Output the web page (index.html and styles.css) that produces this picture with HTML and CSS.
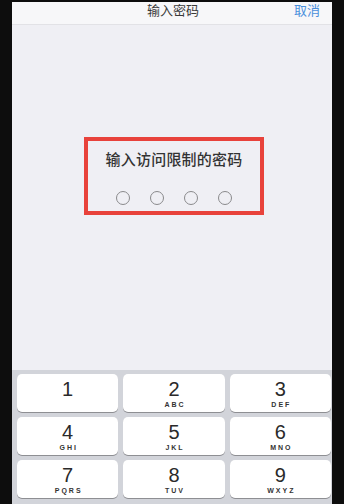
FILE: index.html
```html
<!DOCTYPE html>
<html lang="zh">
<head>
<meta charset="utf-8">
<link rel="stylesheet" href="styles.css">
</head>
<body>
<div class="screen">
  <div class="header">
    <span class="title">输入密码</span>
    <span class="cancel">取消</span>
  </div>
  <div class="content">
    <div class="box">
      <div class="prompt">输入访问限制的密码</div>
      <div class="dots">
        <span class="dot"></span><span class="dot"></span><span class="dot"></span><span class="dot"></span>
      </div>
    </div>
  </div>
  <div class="keypad">
    <div class="key"><span class="num">1</span><span class="letters"></span></div>
    <div class="key"><span class="num">2</span><span class="letters">ABC</span></div>
    <div class="key"><span class="num">3</span><span class="letters">DEF</span></div>
    <div class="key"><span class="num">4</span><span class="letters">GHI</span></div>
    <div class="key"><span class="num">5</span><span class="letters">JKL</span></div>
    <div class="key"><span class="num">6</span><span class="letters">MNO</span></div>
    <div class="key"><span class="num">7</span><span class="letters">PQRS</span></div>
    <div class="key"><span class="num">8</span><span class="letters">TUV</span></div>
    <div class="key"><span class="num">9</span><span class="letters">WXYZ</span></div>
  </div>
</div>
</body>
</html>
```
FILE: styles.css
```css
html, body {
  margin: 0;
  padding: 0;
  background: #0d0d0d;
  height: 504px;
  overflow: hidden;
}
body {
  font-family: "Liberation Sans", "Noto Sans CJK SC", sans-serif;
}
.screen {
  margin: 2px 0 0 12px;
  width: 320px;
  height: 502px;
  display: flex;
  flex-direction: column;
  background: #efeff4;
}
.header {
  height: 22px;
  background: #f7f7f9;
  border-bottom: 1px solid #e2e2e6;
  position: relative;
  display: flex;
  justify-content: center;
  align-items: flex-start;
  font-family: "Noto Sans CJK SC", sans-serif;
  font-size: 13px;
  line-height: 15px;
}
.title {
  color: #3a3a3a;
  margin-left: 2px;
}
.cancel {
  position: absolute;
  right: 12px;
  top: 0;
  color: #4a8fdc;
}
.content {
  flex: 1;
  padding-top: 112px;
}
.box {
  margin-left: 72px;
  width: 172px;
  height: 70px;
  border: 4px solid #e8423b;
  display: flex;
  flex-direction: column;
  align-items: center;
}
.prompt {
  margin-top: 8px;
  font-family: "Noto Sans CJK SC", sans-serif;
  font-size: 15px;
  font-weight: 500;
  line-height: 20px;
  color: #333;
  letter-spacing: 0.2px;
}
.dots {
  margin-top: 22px;
  display: flex;
  gap: 20px;
}
.dot {
  width: 12px;
  height: 12px;
  border: 1.2px solid #8a8a8c;
  border-radius: 50%;
}
.keypad {
  height: 134px;
  background: #d2d4da;
  box-sizing: border-box;
  padding: 4px 1px 0 5px;
  display: grid;
  grid-template-columns: repeat(3, 1fr);
  grid-template-rows: repeat(3, 38px);
  gap: 5px;
}
.key {
  background: #fff;
  border-radius: 5px;
  box-shadow: 0 1px 0 #8e8f93;
  display: flex;
  flex-direction: column;
  align-items: center;
  color: #2a2a2a;
}
.num {
  margin-top: 5px;
  font-size: 20px;
  line-height: 20px;
}
.letters {
  font-size: 7px;
  font-weight: bold;
  letter-spacing: 2px;
  margin-left: 2px;
  line-height: 9px;
  margin-top: 1px;
  color: #333;
}
```
